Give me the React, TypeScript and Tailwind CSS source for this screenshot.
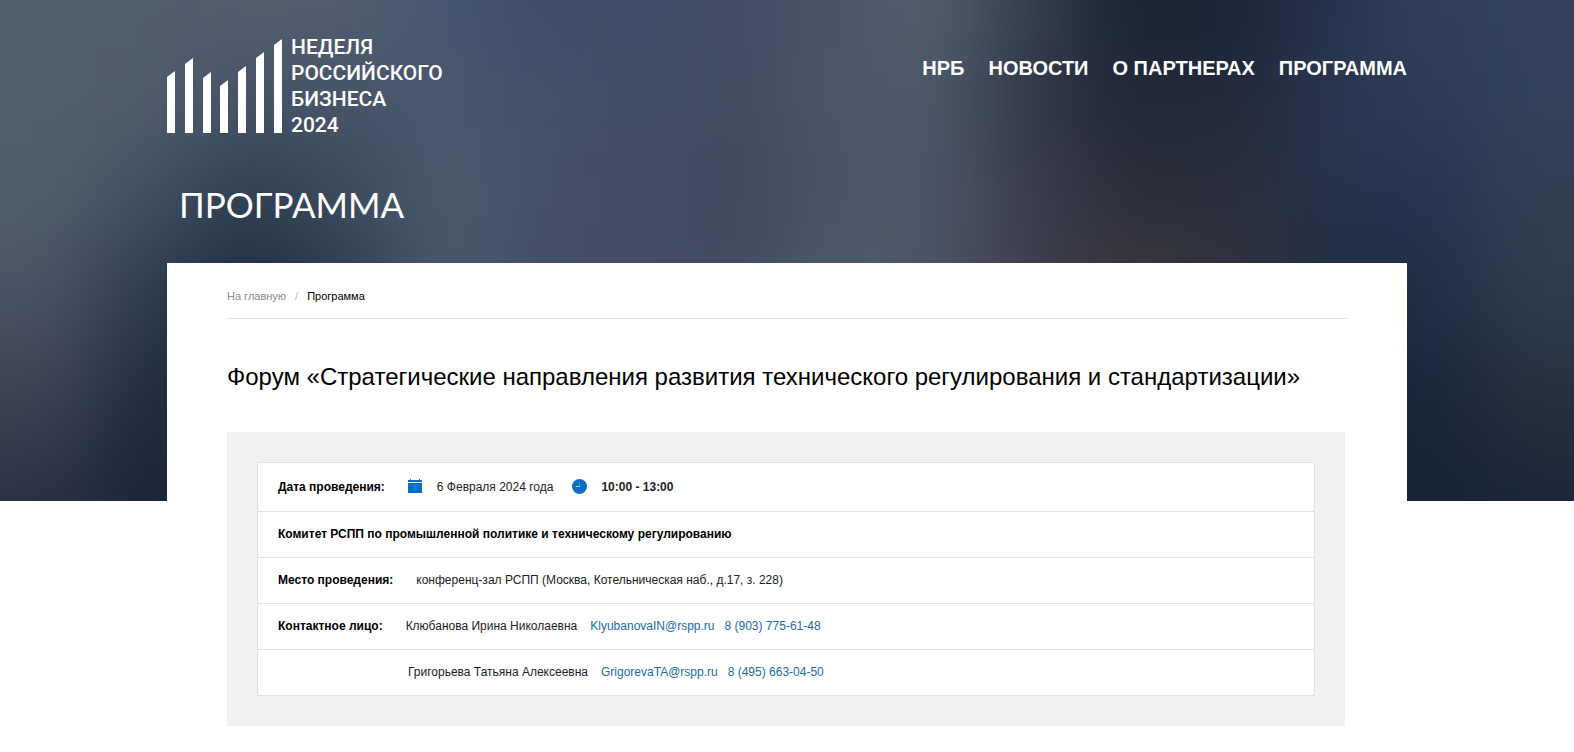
import React from "react";

const navItems = [
  { name: "НРБ", href: "#nrb" },
  { name: "НОВОСТИ", href: "#news" },
  { name: "О ПАРТНЕРАХ", href: "#partners" },
  { name: "ПРОГРАММА", href: "#program" },
];

// Blurred backdrop: rows of colour cells, one row per 100px of hero height
const backdrop = [
  ["#4f5d6c", "#505d6c", "#535e6e", "#525e6e", "#455770", "#3f4f68", "#404e67", "#434e66", "#4a5668", "#525f6d", "#343e4e", "#192435", "#1a2536", "#27334c", "#2f3f5b", "#33435b"],
  ["#4f5d6c", "#505c6b", "#475467", "#485469", "#4a586e", "#44526a", "#424e66", "#424d62", "#4c586a", "#4d5869", "#313748", "#222838", "#232a3a", "#29364f", "#2c3b56", "#31425a"],
  ["#4f5d6b", "#425062", "#2e3d50", "#3c4a5d", "#4c5a6d", "#465268", "#444c66", "#41495d", "#4a5768", "#4d5769", "#3a3c4c", "#2d2f3b", "#2c303d", "#26334a", "#25334f", "#2f4052"],
  ["#4a5365", "#2c394c", "#1d2b40", "#2d3a4e", "#4b596b", "#424d65", "#484d68", "#444d62", "#505c6c", "#4b5466", "#3e3e4b", "#3a383f", "#34353f", "#202c40", "#212e44", "#2d3b4d"],
  ["#3c4153", "#202c3f", "#1a273b", "#2d3a4e", "#4b586b", "#424d65", "#484d68", "#444d62", "#505c6c", "#4b5466", "#3e3e4b", "#3a383f", "#30303a", "#1b283b", "#18253a", "#26313f"],
  ["#2b3144", "#1a2538", "#182539", "#2d3a4e", "#4b586b", "#424d65", "#484d68", "#444d62", "#505c6c", "#4b5466", "#3e3e4b", "#3a383f", "#30303a", "#1a2637", "#162336", "#1a2738"],
];

const Backdrop = () => (
  <svg
    className="absolute inset-0 h-full w-full"
    viewBox="0 0 1600 500"
    preserveAspectRatio="none"
    aria-hidden="true"
  >
    <defs>
      <filter id="soften" x="-10%" y="-20%" width="120%" height="140%" colorInterpolationFilters="sRGB">
        <feGaussianBlur stdDeviation="42" />
      </filter>
    </defs>
    <g filter="url(#soften)">
      {backdrop.map((row, y) =>
        row.map((fill, x) => {
          const left = x === 0 ? -200 : x * 100;
          const right = x === 15 ? 1800 : (x + 1) * 100;
          const top = y === 0 ? -200 : y * 100 - 50;
          const bottom = y === 5 ? 700 : y * 100 + 50;
          return (
            <rect key={`${x}-${y}`} x={left} y={top} width={right - left + 1} height={bottom - top + 1} fill={fill} />
          );
        })
      )}
    </g>
  </svg>
);

const Logo = () => (
  <a href="#home" className="flex items-start gap-2 text-white">
    <svg className="h-[95px] w-[116px]" viewBox="0 0 116 95" fill="currentColor" aria-hidden="true">
      <path d="M0 38 8 32V94H0Z" />
      <path d="M18 25 26 19V94H18Z" />
      <path d="M36 39 44 33V94H36Z" />
      <path d="M53 47 61 41V94H53Z" />
      <path d="M71 33 79 27V94H71Z" />
      <path d="M89 19 97 13V94H89Z" />
      <path d="M107 6 115 0V94H107Z" />
    </svg>
    <span className="-mt-[5px] font-[Roboto,sans-serif] text-[21px] leading-[26px] font-medium">
      НЕДЕЛЯ
      <br />
      РОССИЙСКОГО
      <br />
      БИЗНЕСА
      <br />
      2024
    </span>
  </a>
);

const CalendarIcon = () => (
  <svg className="h-[14px] w-[14px] text-[#0a6fc2]" viewBox="0 0 14 14" fill="currentColor" aria-hidden="true">
    <path d="M0 1H2V0H3V1H11V0H12V1H14V3H0Z" />
    <path d="M0 4H14V14H0Z" />
    <path d="M7 6V11" stroke="#3d8fd2" fill="none" />
  </svg>
);

const ClockIcon = () => (
  <svg className="h-[15px] w-[15px] text-[#0a6fc2]" viewBox="0 0 15 15" fill="currentColor" aria-hidden="true">
    <circle cx="7.5" cy="7.5" r="7.5" />
    <path d="M4 7.500H8" stroke="#a9cfec" fill="none" />
    <path d="M7.500 3V7" stroke="#3d8fd2" fill="none" />
  </svg>
);

const contacts = [
  { label: "Контактное лицо:", person: "Клюбанова Ирина Николаевна", email: "KlyubanovaIN@rspp.ru", phone: "8 (903) 775-61-48" },
  { label: "", person: "Григорьева Татьяна Алексеевна", email: "GrigorevaTA@rspp.ru", phone: "8 (495) 663-04-50" },
];

const App = () => {
  return (
    <div className="relative bg-white font-['Liberation_Sans',Arial,sans-serif] text-black">
      <div className="absolute inset-x-0 top-0 h-[501px] overflow-hidden bg-[#2d3a4e]">
        <Backdrop />
      </div>

      <div className="relative mx-auto max-w-[1240px]">
        <header className="flex items-start justify-between pt-[39px]">
          <Logo />
          <nav className="flex gap-6 pt-[17px]">
            {navItems.map((item) => (
              <a key={item.href} href={item.href} className="text-xl leading-6 font-bold text-white">
                {item.name}
              </a>
            ))}
          </nav>
        </header>

        <h1 className="px-3 pt-11 pb-[37px] font-[Lato,sans-serif] text-[35px] leading-[44px] font-normal text-white">
          ПРОГРАММА
        </h1>

        <main className="bg-white px-[60px] pt-[26px] pb-6">
          <nav className="flex border-b border-[#e2e3e5] pb-[15px] text-[11px] leading-[14px]">
            <a href="#home" className="text-[#8b8b8b]">На главную</a>
            <span className="px-[9px] text-[#b5b5b5]">/</span>
            <span>Программа</span>
          </nav>

          <h2 className="pt-11 pb-[41px] text-2xl leading-7">
            Форум «Стратегические направления развития технического регулирования и стандартизации»
          </h2>

          <section className="mr-[2px] bg-[#f0f1f3] p-[30px]">
            <div className="divide-y divide-[#e2e3e5] border border-[#e2e3e5] bg-white text-xs leading-[15px] text-[#222]">
              <div className="flex items-center px-5 py-4 leading-4">
                <b className="text-black">Дата проведения:</b>
                <span className="ml-[23px] pb-[2px]"><CalendarIcon /></span>
                <span className="ml-[15px]">6 Февраля 2024 года</span>
                <span className="ml-[19px] pb-px"><ClockIcon /></span>
                <b className="ml-[14px]">10:00 - 13:00</b>
              </div>
              <div className="flex items-center px-5 py-[15px]">
                <b className="text-black">Комитет РСПП по промышленной политике и техническому регулированию</b>
              </div>
              <div className="flex items-center px-5 py-[15px]">
                <b className="text-black">Место проведения:</b>
                <span className="ml-[23px]">конференц-зал РСПП (Москва, Котельническая наб., д.17, з. 228)</span>
              </div>
              {contacts.map((contact) => (
                <div key={contact.email} className="flex items-center px-5 py-[15px]">
                  <b className={contact.label ? "mr-[23px] text-black" : "w-[130px]"}>{contact.label}</b>
                  <span>{contact.person}</span>
                  <a href={`mailto:${contact.email}`} className="ml-[13px] text-[#1a6bb0]">{contact.email}</a>
                  <a href={`tel:${contact.phone}`} className="ml-[10px] text-[#1a6bb0]">{contact.phone}</a>
                </div>
              ))}
            </div>
          </section>
        </main>
      </div>
    </div>
  );
};

export default App;
